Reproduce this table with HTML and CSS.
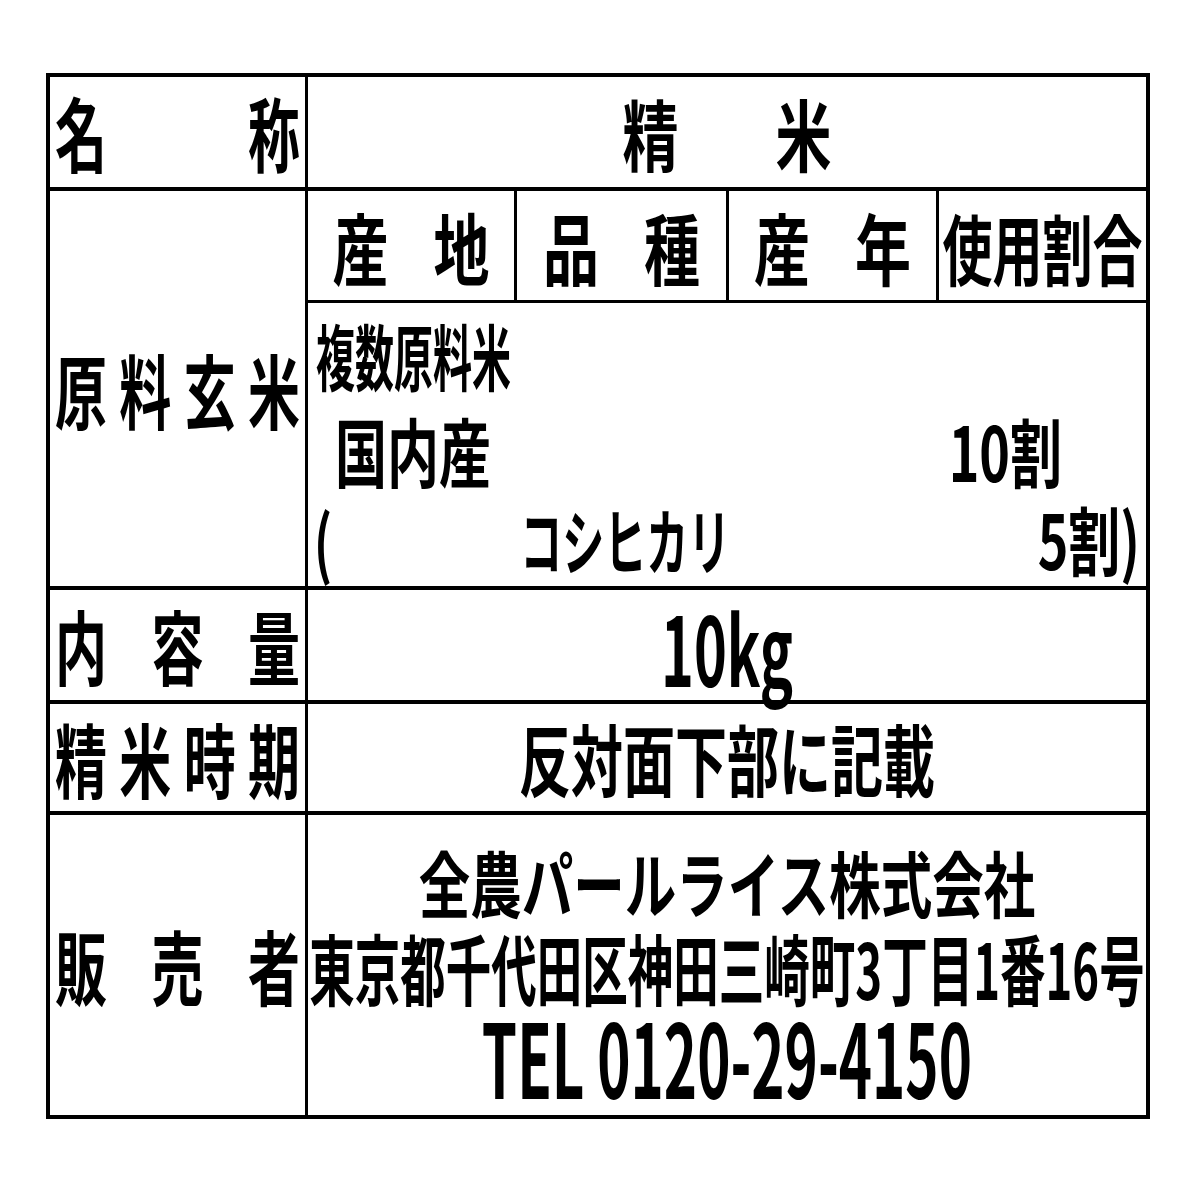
FILE: index.html
```html
<!DOCTYPE html>
<html lang="ja">
<head>
<meta charset="utf-8">
<title>精米 表示</title>
<link rel="stylesheet" href="styles.css">
</head>
<body>
<div class="sheet">
  <div class="row r-name">
    <div class="lab"><span class="t lt">名</span><span class="t lt">称</span></div>
    <div class="val"><div class="pair"><span class="t ht">精</span><span class="t ht">米</span></div></div>
  </div>
  <div class="row r-raw">
    <div class="lab"><span class="t lt">原</span><span class="t lt">料</span><span class="t lt">玄</span><span class="t lt">米</span></div>
    <div class="val raw">
      <div class="sub">
        <div class="sc sc1"><span class="t st">産</span><span class="t st">地</span></div>
        <div class="sc sc2"><span class="t st">品</span><span class="t st">種</span></div>
        <div class="sc sc3"><span class="t st">産</span><span class="t st">年</span></div>
        <div class="sc sc4"><span class="t st4">使用割合</span></div>
      </div>
      <div class="rawbody">
        <div class="ln ln1"><span class="t multi">複数原料米</span></div>
        <div class="ln ln2"><span class="t dom">国内産</span><span class="t dom pct">10割</span></div>
        <div class="ln ln3"><span class="t par">(</span><span class="t kana">コシヒカリ</span><span class="t dom pct2">5割)</span></div>
      </div>
    </div>
  </div>
  <div class="row r-qty">
    <div class="lab"><span class="t lt">内</span><span class="t lt">容</span><span class="t lt">量</span></div>
    <div class="val"><span class="t kg">10kg</span></div>
  </div>
  <div class="row r-date">
    <div class="lab"><span class="t lt">精</span><span class="t lt">米</span><span class="t lt">時</span><span class="t lt">期</span></div>
    <div class="val"><span class="t note">反対面下部に記載</span></div>
  </div>
  <div class="row r-seller">
    <div class="lab"><span class="t lt">販</span><span class="t lt">売</span><span class="t lt">者</span></div>
    <div class="val seller">
      <div class="sl"><span class="t co">全農パールライス株式会社</span></div>
      <div class="sl"><span class="t addr">東京都千代田区神田三崎町3丁目1番16号</span></div>
      <div class="sl"><span class="t tel">TEL 0120-29-4150</span></div>
    </div>
  </div>
</div>
</body>
</html>
```

FILE: styles.css
```css
* { box-sizing: border-box; }
html, body { margin: 0; padding: 0; background: #fff; }
body {
  font-family: "Noto Sans CJK JP", "Noto Sans", sans-serif;
  font-weight: 700;
  color: #000;
  width: 1200px;
  height: 1200px;
  overflow: hidden;
}
.sheet {
  width: 1104px;
  height: 1046px;
  margin: 73px 0 0 46px;
  border: 4px solid #000;
  display: flex;
  flex-direction: column;
}
.row { display: flex; border-bottom: 4px solid #000; }
.row:last-child { border-bottom: 0; flex: 1; }
.r-name { height: 114px; }
.r-raw { height: 399px; }
.r-qty { height: 114px; }
.r-date { height: 111px; }

.lab {
  width: 258px;
  flex: none;
  border-right: 3px solid #000;
  display: flex;
  align-items: center;
  justify-content: space-between;
  padding: 0 5px;
}
.val {
  flex: 1;
  display: flex;
  align-items: center;
  justify-content: center;
}

.t { display: inline-block; line-height: 1; white-space: pre; }
.lt { font-size: 52px; transform: scaleY(1.56); }

.pair { display: flex; gap: 97px; }
.ht { font-size: 56px; transform: scaleY(1.4); }

.raw { flex-direction: column; align-items: stretch; justify-content: flex-start; }
.sub { height: 112px; display: flex; border-bottom: 3px solid #000; }
.sc { display: flex; align-items: center; justify-content: center; gap: 45px; border-right: 3px solid #000; }
.sc1 { width: 209px; }
.sc2 { width: 212px; }
.sc3 { width: 210px; }
.sc4 { flex: 1; border-right: 0; }
.st { font-size: 56px; transform: scaleY(1.4); }
.st4 { font-size: 50px; transform: scaleY(1.55); }

.rawbody { flex: 1; display: flex; flex-direction: column; }
.ln { display: flex; align-items: center; }
.ln1 { height: 102px; padding-left: 8px; }
.ln2 { height: 90px; padding-left: 27px; padding-right: 84px; }
.ln3 { height: 86px; padding-left: 6px; padding-right: 6px; }
.multi { font-size: 39px; transform: scaleY(1.85); }
.dom { font-size: 52px; transform: scaleY(1.45); }
.pct { margin-left: auto; }
.par { font-size: 48px; transform: scaleY(1.55); }
.kana { font-size: 42px; transform: scaleY(1.7); margin-left: 188px; }
.pct2 { margin-left: auto; }

.kg { font-size: 60px; transform: scale(0.93, 1.6); }
.note { font-size: 52px; transform: scaleY(1.5); }

.seller { flex-direction: column; justify-content: flex-start; padding-top: 22px; }
.sl { height: 87px; display: flex; align-items: center; justify-content: center; }
.co { font-size: 51.5px; transform: scaleY(1.4); }
.addr { font-size: 45.5px; transform: scaleY(1.7); }
.tel { font-size: 61px; transform: scale(0.925, 1.68); }
```
